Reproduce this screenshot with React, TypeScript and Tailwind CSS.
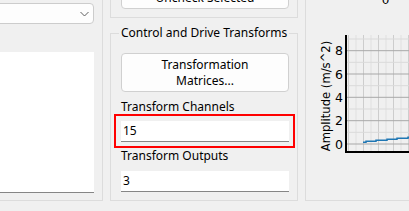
import React from "react";

const grid = "border-[#dcdcdc]";

function TextBox({ value }: { value: string }) {
  return (
    <div className="h-[21px] bg-white border-b border-[#868686] px-[2px] flex items-center leading-[16px]">
      {value}
    </div>
  );
}

function Chart() {
  const majorY = [50.7, 74, 97.3, 120.7, 144];
  const minorY = [39, 62.3, 85.7, 109, 132.3];
  const majorX = [348.5, 363.5, 378.5, 393.5, 408.5];
  const minorX = [356, 371, 386, 401];
  const labels = ["8", "6", "4", "2", "0"];

  return (
    <svg width="103" height="200" viewBox="306 0 103 200" className="block">
      {minorX.map((x) => (
        <line key={"vx" + x} x1={x} y1={35} x2={x} y2={152} stroke="#e0e0e0" strokeWidth={1} />
      ))}
      {majorX.map((x) => (
        <line key={"mx" + x} x1={x} y1={35} x2={x} y2={152} stroke="#cdcdcd" strokeWidth={1} />
      ))}
      {minorY.map((y) => (
        <line key={"vy" + y} x1={346} y1={y} x2={409} y2={y} stroke="#dadada" strokeWidth={1} />
      ))}
      {majorY.map((y) => (
        <line key={"my" + y} x1={346} y1={y} x2={409} y2={y} stroke="#a8a8a8" strokeWidth={1} />
      ))}
      <polyline
        points="363,142.3 366,142.3 366,141.3 376,141.3 376,140.3 387,140.3 387,139.3 397,139.3 397,138.3 408,138.3 408,137.3 410,137.3"
        fill="none"
        stroke="#1f77b4"
        strokeWidth={1.5}
      />
      <line x1={346} y1={35} x2={346} y2={153} stroke="#000" strokeWidth={2} />
      <line x1={345} y1={152} x2={409} y2={152} stroke="#000" strokeWidth={2} />
      {labels.map((t, i) => (
        <text
          key={t}
          x={343}
          y={majorY[i] + 4.5}
          textAnchor="end"
          fontFamily="'DejaVu Sans', sans-serif"
          fontSize={12.5}
          fill="#000"
        >
          {t}
        </text>
      ))}
      <text
        transform="translate(330,96) rotate(-90)"
        textAnchor="middle"
        fontFamily="'DejaVu Sans', sans-serif"
        fontSize={11.6}
        fill="#000"
      >
        Amplitude (m/s^2)
      </text>
      <text x={385.5} y={3.5} textAnchor="middle" fontFamily="'DejaVu Sans', sans-serif" fontSize={12} fill="#000">
        0
      </text>
    </svg>
  );
}

export default function App() {
  return (
    <div className="w-[409px] h-[211px] overflow-hidden bg-[#f0f0f0] flex font-['Noto_Sans',sans-serif] text-[12px] text-black">
      {/* left panel */}
      <div className={`w-[103px] h-[201px] shrink-0 border-r border-b ${grid} pr-[8px] flex flex-col`}>
        <div className="mt-[3px] -ml-[12px] h-[21px] bg-[#fdfdfd] border border-[#cccccc] rounded-[4px] flex items-center justify-end pr-[4px]">
          <svg width="9" height="6" viewBox="0 0 9 6">
            <path d="M0.5 1 L4.5 5 L8.5 1" fill="none" stroke="#5f5f5f" strokeWidth={1} />
          </svg>
        </div>
        <div className="mt-[28px] -ml-[12px] h-[141px] bg-white border-b border-[#868686]" />
      </div>

      {/* middle column */}
      <div className="w-[188px] shrink-0 ml-[7px] flex flex-col">
        <div className={`h-[18px] border-x border-b ${grid} pl-[10px] pr-[8px]`}>
          <button className="-mt-[14px] w-full h-[23px] bg-[#fdfdfd] border border-[#d0d0d0] rounded-[4px] leading-[16px] flex items-center justify-center whitespace-nowrap">
            Uncheck Selected
          </button>
        </div>

        <fieldset className={`mt-[7px] border ${grid} pl-[10px] pr-[8px] pt-[12px] pb-[8px] min-w-0`}>
          <legend className="-ml-[2px] px-[2px] leading-[16px] whitespace-nowrap">Control and Drive Transforms</legend>
          <button className="w-full h-[39px] bg-[#fdfdfd] border border-[#d0d0d0] rounded-[4px] leading-[16px] text-center flex flex-col items-center justify-center">
            <span>Transformation</span>
            <span>Matrices...</span>
          </button>
          <div className="mt-[7px] leading-[16px]">Transform Channels</div>
          <div className="mt-[6px] relative">
            <TextBox value="15" />
            <div className="absolute -left-[7px] -top-[7px] -right-[6px] -bottom-[6px] border-2 border-[#ff0000]" />
          </div>
          <div className="mt-[6px] leading-[16px]">Transform Outputs</div>
          <div className="mt-[7px]">
            <TextBox value="3" />
          </div>
        </fieldset>
      </div>

      {/* right panel with chart */}
      <div className={`ml-[7px] flex-1 h-[201px] border-l border-b ${grid} overflow-hidden`}>
        <Chart />
      </div>
    </div>
  );
}
